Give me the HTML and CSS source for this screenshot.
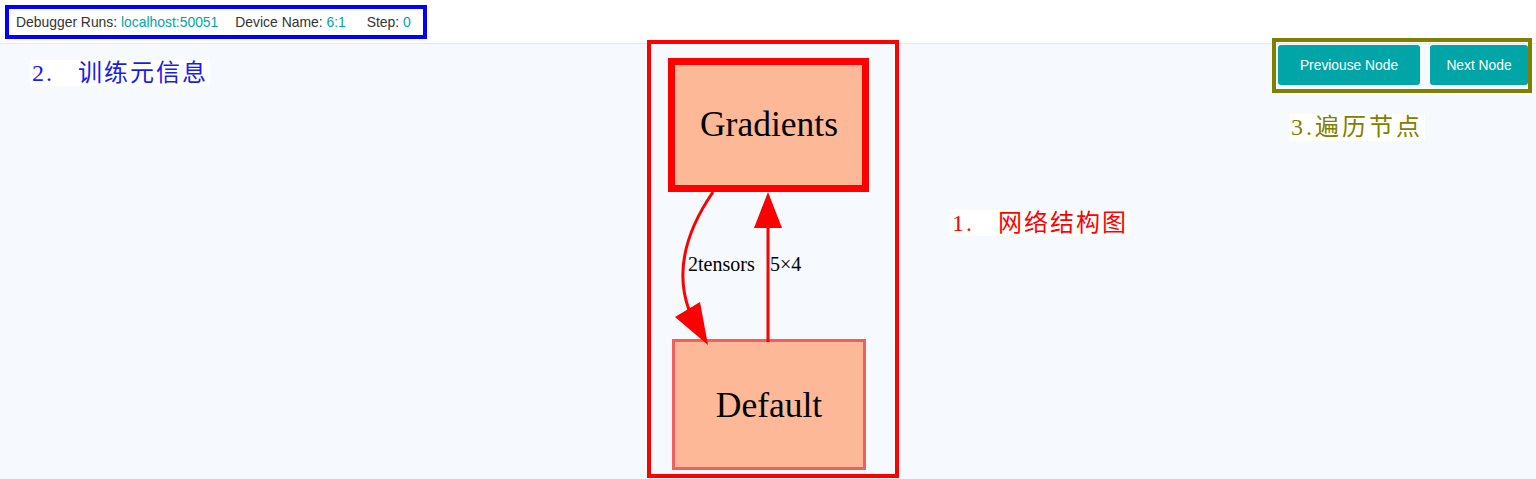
FILE: index.html
```html
<!DOCTYPE html>
<html lang="zh-CN">
<head>
    <meta charset="UTF-8">
    <title>Debugger</title>
    <link rel="stylesheet" href="styles.css">
</head>
<body>
    <div class="header">
        <div class="run-info mark-blue">
            <span class="item">Debugger Runs: <span class="value">localhost:50051</span></span>
            <span class="item">Device Name: <span class="value">6:1</span></span>
            <span class="item">Step: <span class="value">0</span></span>
        </div>
    </div>
    <div class="main">
        <div class="note note-blue">2.&nbsp;&nbsp;&nbsp;训练元信息</div>
        <div class="graph-frame">
            <svg class="graph" width="244" height="430" viewBox="0 0 244 430">
                <rect x="20.5" y="17.5" width="194" height="127" fill="#fdb898" stroke="#ff0000" stroke-width="7"/>
                <text x="118" y="92" class="node-label">Gradients</text>
                <rect x="22.5" y="296.5" width="191" height="128" fill="#fdb898" stroke="#f25f5f" stroke-width="3"/>
                <text x="118" y="373" class="node-label">Default</text>
                <path d="M62,148 C40,180 22,222 38,266" fill="none" stroke="#ff0000" stroke-width="3"/>
                <polygon points="24,273 49,258 57,301" fill="#ff0000"/>
                <line x1="117" y1="298" x2="117" y2="182" stroke="#ff0000" stroke-width="3"/>
                <polygon points="117,148 103,184 131,184" fill="#ff0000"/>
                <text x="37" y="227" class="edge-label">2tensors</text>
                <text x="119" y="227" class="edge-label">5×4</text>
            </svg>
        </div>
        <div class="note note-red">1.&nbsp;&nbsp;&nbsp;网络结构图</div>
        <div class="toolbar">
            <div class="nav-buttons">
                <button class="btn">Previouse Node</button>
                <button class="btn">Next Node</button>
            </div>
            <div class="note-olive">3.遍历节点</div>
        </div>
    </div>
</body>
</html>
```
FILE: styles.css
```css
body {
    margin: 0;
    background-color: #f6f9fe;
    font-family: "Liberation Sans", Arial, sans-serif;
    overflow: hidden;
}
.header {
    height: 44px;
    background-color: #fff;
    border-bottom: 1px solid #e5eaf3;
    padding: 5px 0 0 5px;
    box-sizing: border-box;
}
.run-info {
    display: inline-flex;
    align-items: center;
    height: 26px;
    width: 407px;
    padding-left: 7px;
    font-size: 13.9px;
    color: #333;
    white-space: nowrap;
}
.mark-blue {
    border: 4px solid #0000ff;
}
.item {
    margin-right: 17px;
}
.item:nth-child(2) {
    margin-right: 21px;
}
.value {
    color: #00a5a7;
}
.main {
    position: relative;
    height: 435px;
}
.graph-frame {
    position: absolute;
    left: 647px;
    top: -4px;
    width: 244px;
    height: 430px;
    border: 4px solid #ff0000;
}
.graph {
    display: block;
}
.node-label {
    font-family: "Liberation Serif", "Times New Roman", serif;
    font-size: 35.5px;
    text-anchor: middle;
    fill: #000;
}
.edge-label {
    font-family: "Liberation Serif", "Times New Roman", serif;
    font-size: 20px;
    fill: #000;
}
.note {
    position: absolute;
    background-color: #fff;
    font-family: "Liberation Serif", "Noto Sans CJK SC", serif;
    font-size: 24px;
    line-height: 26px;
    letter-spacing: 2px;
    padding: 0 2px;
}
.note-blue {
    left: 30px;
    top: 16px;
    color: #1a1aee;
}
.note-red {
    left: 950px;
    top: 166px;
    color: #ff0000;
}
.toolbar {
    position: absolute;
    right: 4px;
    top: -6px;
    display: flex;
    flex-direction: column;
}
.nav-buttons {
    display: flex;
    gap: 10px;
    border: 4px solid #808000;
    padding: 3px 0 4px 2px;
    width: 250px;
    height: 40px;
}
.btn {
    background-color: #00a5a7;
    color: #fff;
    border: none;
    border-radius: 3px;
    font-family: "Liberation Sans", Arial, sans-serif;
    font-size: 13.8px;
    height: 40px;
    padding: 0;
    flex-shrink: 0;
}
.btn:first-child {
    width: 142px;
}
.btn:last-child {
    width: 98px;
}
.note-olive {
    align-self: flex-start;
    margin: 21px 0 0 17px;
    background-color: #fff;
    color: #808000;
    font-family: "Liberation Serif", "Noto Sans CJK SC", serif;
    font-size: 24px;
    line-height: 27px;
    letter-spacing: 3px;
    padding: 0 2px;
}
```
